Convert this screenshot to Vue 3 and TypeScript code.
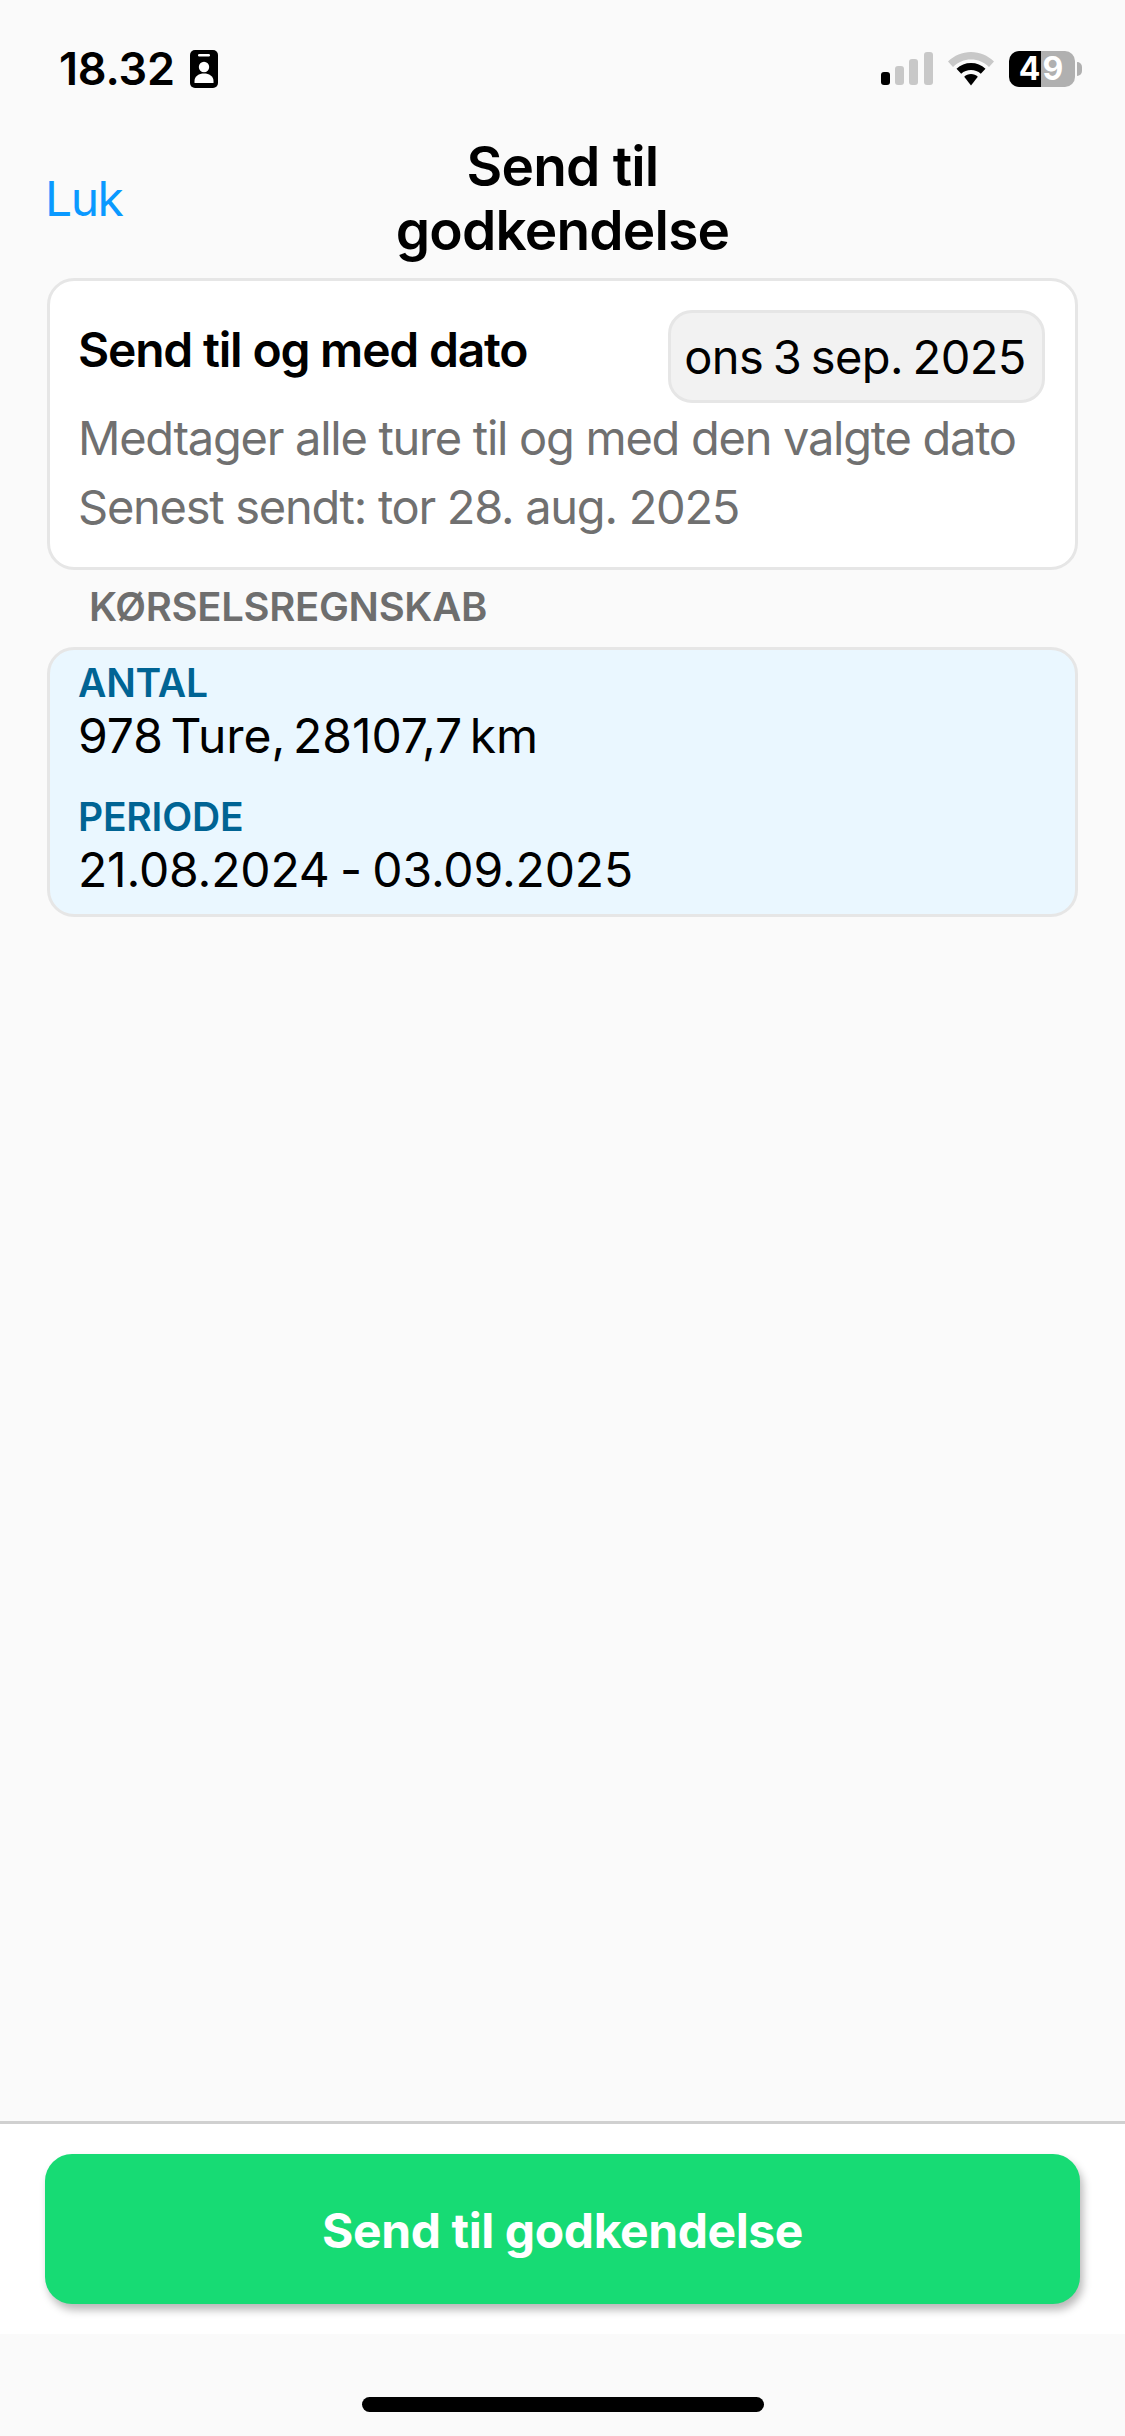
<script setup lang="ts">
const title: string = 'Send til godkendelse'
</script>

<template>
  <div class="page">
    <div class="status">
      <div class="status-left">
        <span class="time">18.32</span>
        <svg class="id" width="28" height="38" viewBox="0 0 28 38">
          <rect width="28" height="38" rx="5" fill="#000" />
          <rect x="8" y="4" width="12" height="2.5" rx="1.2" fill="#fff" />
          <circle cx="14" cy="17" r="5.2" fill="#fff" />
          <path d="M4.5 33 v-2 c0-5 4.5-7.5 9.5-7.5 s9.500 2.500 9.500 7.500 v2 z" fill="#fff" />
        </svg>
      </div>
      <div class="status-right">
        <svg width="52" height="33" viewBox="0 0 52 33">
          <rect x="0" y="20" width="9" height="13" rx="3" fill="#000" />
          <rect x="14" y="14" width="9" height="19" rx="3" fill="#c8c8c8" />
          <rect x="28" y="7" width="9" height="26" rx="3" fill="#c8c8c8" />
          <rect x="43" y="0" width="9" height="33" rx="3" fill="#c8c8c8" />
        </svg>
        <svg class="wifi" width="46" height="34" viewBox="0 0 46 34">
          <path d="M23 0 C14 0 6.500 3.500 0 9.500 L5 15 C10 10 16 7.500 23 7.500 S36 10 41 15 L46 9.500 C39.500 3.500 32 0 23 0 Z" fill="#c8c8c8" />
          <path d="M23 11 C17.500 11 12.500 13 8.500 16.800 L13.200 21.800 C16 19.200 19.300 18 23 18 S30 19.200 32.800 21.800 L37.500 16.800 C33.500 13 28.500 11 23 11 Z" fill="#000" />
          <path d="M23 22 C20.300 22 18 23 16.200 24.700 L23 33.500 L29.800 24.700 C28 23 25.700 22 23 22 Z" fill="#000" />
        </svg>
        <div class="battery">
          <div class="batt-body">
            <span class="batt-text">49</span>
          </div>
          <div class="batt-nub"></div>
        </div>
      </div>
    </div>

    <header class="nav">
      <span class="close">Luk</span>
      <h1 class="title">Send til<br />godkendelse</h1>
    </header>

    <main class="content">
      <section class="card">
        <div class="row">
          <span class="row-label">Send til og med dato</span>
          <span class="pill">ons 3 sep. 2025</span>
        </div>
        <p class="hint">Medtager alle ture til og med den valgte dato</p>
        <p class="hint">Senest sendt: tor 28. aug. 2025</p>
      </section>

      <h2 class="section">KØRSELSREGNSKAB</h2>

      <section class="card info">
        <div class="label">ANTAL</div>
        <div class="value tight">978 Ture, 28107,7 km</div>
        <div class="label second">PERIODE</div>
        <div class="value">21.08.2024 - 03.09.2025</div>
      </section>
    </main>

    <footer class="footer">
      <button class="send" type="button">{{ title }}</button>
    </footer>

    <div class="home-zone"><div class="home"></div></div>
  </div>
</template>

<style>
html, body { margin: 0; padding: 0; background: #fafafa; }
</style>

<style scoped>
.page {
  width: 1125px;
  height: 2436px;
  display: flex;
  flex-direction: column;
  background: #fafafa;
  font-family: Inter, "Liberation Sans", sans-serif;
  color: #000;
  overflow: hidden;
}
.status {
  height: 134px;
  box-sizing: border-box;
  padding: 50px 43px 0 59px;
  display: flex;
  justify-content: space-between;
  align-items: flex-start;
}
.status-left { display: flex; align-items: center; gap: 15px; height: 37px; }
.time { font-size: 45px; font-weight: 600; line-height: 37px; letter-spacing: -0.2px; }
.status-right { display: flex; align-items: center; gap: 15px; height: 37px; }
.wifi { display: block; }
.battery { display: flex; align-items: center; gap: 2px; }
.batt-body {
  width: 66px;
  height: 36px;
  border-radius: 10px;
  background: linear-gradient(90deg, #000 0, #000 32px, #b0b0b0 32px, #b0b0b0 100%);
  display: flex;
  align-items: center;
  justify-content: center;
}
.batt-text { color: #fff; font-size: 32px; font-weight: 700; line-height: 36px; letter-spacing: 2px; }
.batt-nub { width: 5px; height: 14px; border-radius: 0 5px 5px 0; background: #b0b0b0; }

.nav {
  position: relative;
  height: 134px;
  display: flex;
  justify-content: center;
}
.close {
  position: absolute;
  left: 45px;
  top: 35px;
  font-size: 48px;
  line-height: 60px;
  letter-spacing: -1.5px;
  color: #0a99ff;
}
.title {
  margin: 0;
  font-size: 55px;
  line-height: 64px;
  font-weight: 600;
  letter-spacing: -0.8px;
  text-align: center;
}

.content {
  flex: 1;
  padding: 10px 47px 0;
}
.card {
  box-sizing: border-box;
  background: #fff;
  border: 3px solid #e6e6e6;
  border-radius: 27px;
  padding: 29px 28px 0;
  height: 292px;
}
.row { display: flex; justify-content: space-between; align-items: flex-start; }
.row-label {
  font-size: 48px;
  line-height: 56px;
  font-weight: 600;
  letter-spacing: -1.2px;
  margin-top: 12px;
}
.pill {
  box-sizing: border-box;
  height: 93px;
  width: 377px;
  margin-right: 2px;
  padding-right: 3px;
  border: 3px solid #e6e6e6;
  border-radius: 24px;
  background: #f2f2f2;
  font-size: 47px;
  line-height: 87px;
  text-align: center;
  letter-spacing: -0.6px;
  word-spacing: -3px;
  white-space: nowrap;
}
.hint {
  margin: 0;
  font-size: 47px;
  line-height: 69px;
  color: #707070;
  letter-spacing: -1.27px;
  white-space: nowrap;
}
.section {
  margin: 12px 0 0 42px;
  font-size: 40px;
  line-height: 50px;
  font-weight: 600;
  color: #6e6e6e;
  letter-spacing: -0.3px;
}
.info {
  margin-top: 15px;
  background: #eaf7ff;
  height: 270px;
  padding-top: 10px;
}
.label {
  font-size: 39px;
  line-height: 46px;
  font-weight: 600;
  color: #006494;
  letter-spacing: -0.2px;
}
.label.second { margin-top: 30px; }
.value {
  margin-top: 2px;
  font-size: 48px;
  line-height: 56px;
  letter-spacing: -0.15px;
  word-spacing: -3px;
}
.value.tight { letter-spacing: 0; word-spacing: -6px; }

.footer {
  box-sizing: border-box;
  height: 213px;
  border-top: 3px solid #d0d0d0;
  background: #fff;
  padding: 30px 45px 0;
}
.send {
  display: block;
  width: 100%;
  height: 150px;
  border: 0;
  padding: 2px 0 0;
  border-radius: 27px;
  background: #17db74;
  color: #fff;
  font-family: inherit;
  font-size: 48px;
  font-weight: 700;
  letter-spacing: -0.4px;
  box-shadow: 3px 6px 9px rgba(0, 0, 0, 0.28);
}
.home-zone {
  height: 102px;
  display: flex;
  justify-content: center;
  padding-top: 63px;
  box-sizing: border-box;
}
.home { width: 402px; height: 15px; border-radius: 8px; background: #000; }
</style>
